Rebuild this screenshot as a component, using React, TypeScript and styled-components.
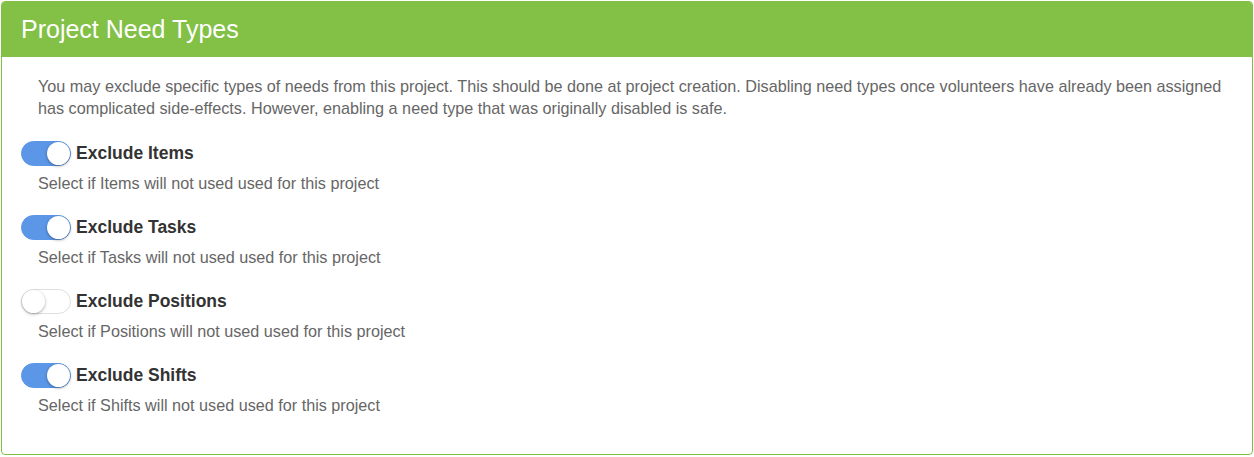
import { createGlobalStyle } from "styled-components";
import styled from "styled-components";

const GlobalStyle = createGlobalStyle`
  html, body {
    margin: 0;
    padding: 0;
    background: #ffffff;
  }
  body {
    font-family: "Liberation Sans", Arial, sans-serif;
  }
`;

const needTypes = [
  { key: "items", name: "Items", excluded: true },
  { key: "tasks", name: "Tasks", excluded: true },
  { key: "positions", name: "Positions", excluded: false },
  { key: "shifts", name: "Shifts", excluded: true },
];

const App = () => {
  return (
    <>
      <GlobalStyle />
      <Panel>
        <PanelHeader>
          <Title>Project Need Types</Title>
        </PanelHeader>
        <PanelBody>
          <Intro>
            You may exclude specific types of needs from this project. This
            should be done at project creation. Disabling need types once
            volunteers have already been assigned has complicated side-effects.
            However, enabling a need type that was originally disabled is safe.
          </Intro>
          {needTypes.map(({ key, name, excluded }) => (
            <Option key={key}>
              <ToggleRow>
                <Switch $on={excluded}>
                  <Knob $on={excluded} />
                </Switch>
                <Label>Exclude {name}</Label>
              </ToggleRow>
              <Help>Select if {name} will not used used for this project</Help>
            </Option>
          ))}
        </PanelBody>
      </Panel>
    </>
  );
};

const Panel = styled.div`
  margin: 1px;
  height: 454px;
  box-sizing: border-box;
  border: 1px solid #80c145;
  border-radius: 4px;
  overflow: hidden;
  background: #ffffff;
`;

const PanelHeader = styled.div`
  height: 55px;
  display: flex;
  align-items: center;
  padding: 0 19px;
  background-color: #82c046;
`;

const Title = styled.h3`
  margin: 0;
  font-size: 25px;
  font-weight: 400;
  color: #ffffff;
`;

const PanelBody = styled.div`
  padding: 18px 19px 20px 19px;
  display: flex;
  flex-direction: column;
`;

const Intro = styled.p`
  margin: 0 0 21px 17px;
  font-size: 16.2px;
  line-height: 22px;
  color: #666666;
`;

const Option = styled.div`
  display: flex;
  flex-direction: column;
  gap: 6px;
  margin-bottom: 20px;
`;

const ToggleRow = styled.div`
  display: flex;
  align-items: center;
  gap: 5px;
  height: 26px;
`;

const Switch = styled.span<{ $on: boolean }>`
  position: relative;
  display: inline-block;
  width: 50px;
  height: 25px;
  box-sizing: border-box;
  border-radius: 13px;
  background: ${(p) => (p.$on ? "#5b96e7" : "#ffffff")};
  border: 1px solid ${(p) => (p.$on ? "#5b96e7" : "#dfdfdf")};
`;

const Knob = styled.span<{ $on: boolean }>`
  position: absolute;
  top: 0;
  left: ${(p) => (p.$on ? "25px" : "0")};
  width: 23px;
  height: 23px;
  border-radius: 50%;
  background: #ffffff;
  box-shadow: 0 1px 3px rgba(0, 0, 0, 0.35);
`;

const Label = styled.span`
  font-size: 17.5px;
  font-weight: 700;
  color: #333333;
`;

const Help = styled.div`
  margin-left: 17px;
  font-size: 16.2px;
  line-height: 22px;
  color: #666666;
`;

export default App;
